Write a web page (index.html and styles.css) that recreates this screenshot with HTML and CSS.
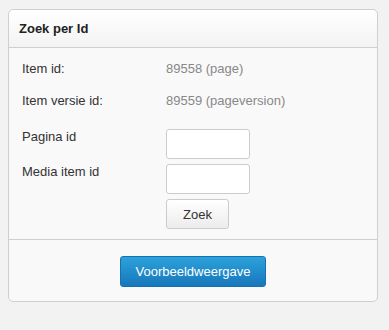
FILE: index.html
```html
<!DOCTYPE html>
<html lang="nl">
<head>
    <meta charset="UTF-8">
    <title>Zoek per Id</title>
    <link rel="stylesheet" href="styles.css">
</head>
<body>
    <div class="panel">
        <div class="panel-heading">Zoek per Id</div>
        <form class="panel-body">
            <div class="row info">
                <span class="label">Item id:</span>
                <span class="value">89558 (page)</span>
            </div>
            <div class="row info">
                <span class="label">Item versie id:</span>
                <span class="value">89559 (pageversion)</span>
            </div>
            <div class="row field">
                <label class="label" for="pageId">Pagina id</label>
                <input type="text" id="pageId">
            </div>
            <div class="row field">
                <label class="label" for="mediaId">Media item id</label>
                <input type="text" id="mediaId">
            </div>
            <div class="row field">
                <span class="label"></span>
                <button type="button" class="btn">Zoek</button>
            </div>
        </form>
        <div class="panel-footer">
            <button type="button" class="btn btn-primary">Voorbeeldweergave</button>
        </div>
    </div>
</body>
</html>
```
FILE: styles.css
```css
* {
    margin: 0;
    padding: 0;
    box-sizing: border-box;
}

body {
    background-color: #f2f2f2;
    font-family: 'Liberation Sans', Arial, sans-serif;
    font-size: 13px;
    color: #333;
    padding: 9px 11px 0 8px;
}

.panel {
    width: 370px;
    background-color: #f9f9f9;
    border: 1px solid #cfcfcf;
    border-radius: 5px;
}

.panel-heading {
    height: 38px;
    padding: 0 10px;
    line-height: 37px;
    font-weight: bold;
    color: #222;
    background: linear-gradient(#ffffff, #f3f3f3);
    border-bottom: 1px solid #cfcfcf;
    border-radius: 5px 5px 0 0;
}

.panel-body {
    padding: 12px 14px 10px 13px;
}

.row {
    display: flex;
}

.label {
    width: 144px;
    flex-shrink: 0;
    color: #333;
}

.info {
    line-height: 18px;
    margin-bottom: 14px;
}

.info + .info {
    margin-bottom: 19px;
}

.value {
    color: #888;
}

.field {
    margin-bottom: 5px;
}

.field:last-child {
    margin-bottom: 0;
}

.field .label {
    line-height: 15px;
}

input[type="text"] {
    width: 84px;
    height: 30px;
    border: 1px solid #cccccc;
    border-radius: 3px;
    background-color: white;
}

.btn {
    height: 30px;
    padding: 0 16px;
    font-family: inherit;
    font-size: 13px;
    color: #333;
    background: linear-gradient(#ffffff, #ececec);
    border: 1px solid #cccccc;
    border-radius: 3px;
    cursor: pointer;
}

.panel-footer {
    border-top: 1px solid #cfcfcf;
    padding: 16px 0 14px;
    text-align: center;
}

.btn-primary {
    height: 31px;
    padding: 0 15px;
    color: white;
    background: linear-gradient(#2ca2dc, #1777bb);
    border: 1px solid #1671b0;
}
```
